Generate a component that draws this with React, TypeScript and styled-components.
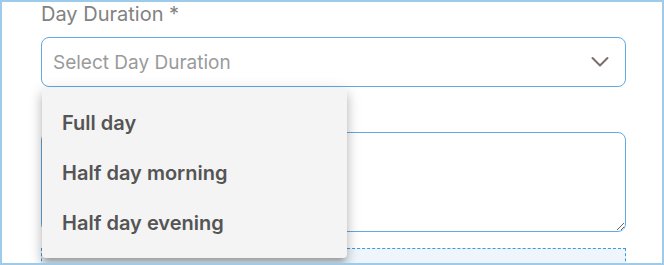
import React from "react";
import styled, { createGlobalStyle } from "styled-components";

const GlobalStyle = createGlobalStyle`
	html, body {
		margin: 0;
		padding: 0;
		background: #ffffff;
	}
	body {
		font-family: Inter, "Noto Sans", sans-serif;
	}
`;

const Frame = styled.div`
	width: 664px;
	height: 265px;
	box-sizing: border-box;
	border: 2px solid #9fcbeb;
	background: #ffffff;
	overflow: hidden;
	padding: 0 37px 0 39px;
`;

const Field = styled.div`
	position: relative;
	display: flex;
	flex-direction: column;
	width: 585px;
`;

const Label = styled.label`
	font-size: 20px;
	line-height: 24px;
	color: #828282;
	height: 35px;
`;

const SelectBox = styled.div`
	height: 50px;
	box-sizing: border-box;
	border: 1px solid #63a9e2;
	border-radius: 8px;
	display: flex;
	align-items: center;
	justify-content: space-between;
	padding: 0 16px 0 11px;
`;

const Placeholder = styled.span`
	font-size: 19px;
	color: #9a9a9a;
`;

const TextArea = styled.textarea`
	margin-top: 45px;
	height: 100px;
	box-sizing: border-box;
	border: 1px solid #63a9e2;
	border-radius: 8px;
	resize: vertical;
	outline: none;
	font-family: inherit;
`;

const DropZone = styled.div`
	margin-top: 16px;
	height: 60px;
	box-sizing: border-box;
	border: 1px dashed #3d9be0;
	background: #eef6fc;
`;

const Menu = styled.ul`
	position: absolute;
	left: 1px;
	top: 86px;
	width: 305px;
	margin: 0;
	padding: 10px 0;
	list-style: none;
	background: #f4f4f4;
	border-radius: 4px;
	box-shadow: 0 5px 5px -3px rgba(0, 0, 0, 0.2), 0 8px 10px 1px rgba(0, 0, 0, 0.14),
		0 3px 14px 2px rgba(0, 0, 0, 0.12);
`;

const MenuItem = styled.li`
	height: 50px;
	display: flex;
	align-items: center;
	padding: 0 20px;
	font-size: 20px;
	font-weight: 600;
	color: #555555;
`;

const Chevron = () => (
	<svg width="18" height="12" viewBox="0 0 18 12">
		<polyline
			points="1.5,2 9,9.5 16.5,2"
			fill="none"
			stroke="#7a6e66"
			strokeWidth="2"
			strokeLinecap="round"
			strokeLinejoin="round"
		/>
	</svg>
);

const options = ["Full day", "Half day morning", "Half day evening"];

export default function App() {
	return (
		<>
			<GlobalStyle />
			<Frame>
				<Field>
					<Label>Day Duration *</Label>
					<SelectBox>
						<Placeholder>Select Day Duration</Placeholder>
						<Chevron />
					</SelectBox>
					<TextArea />
					<DropZone />
					<Menu>
						{options.map((o) => (
							<MenuItem key={o}>{o}</MenuItem>
						))}
					</Menu>
				</Field>
			</Frame>
		</>
	);
}
